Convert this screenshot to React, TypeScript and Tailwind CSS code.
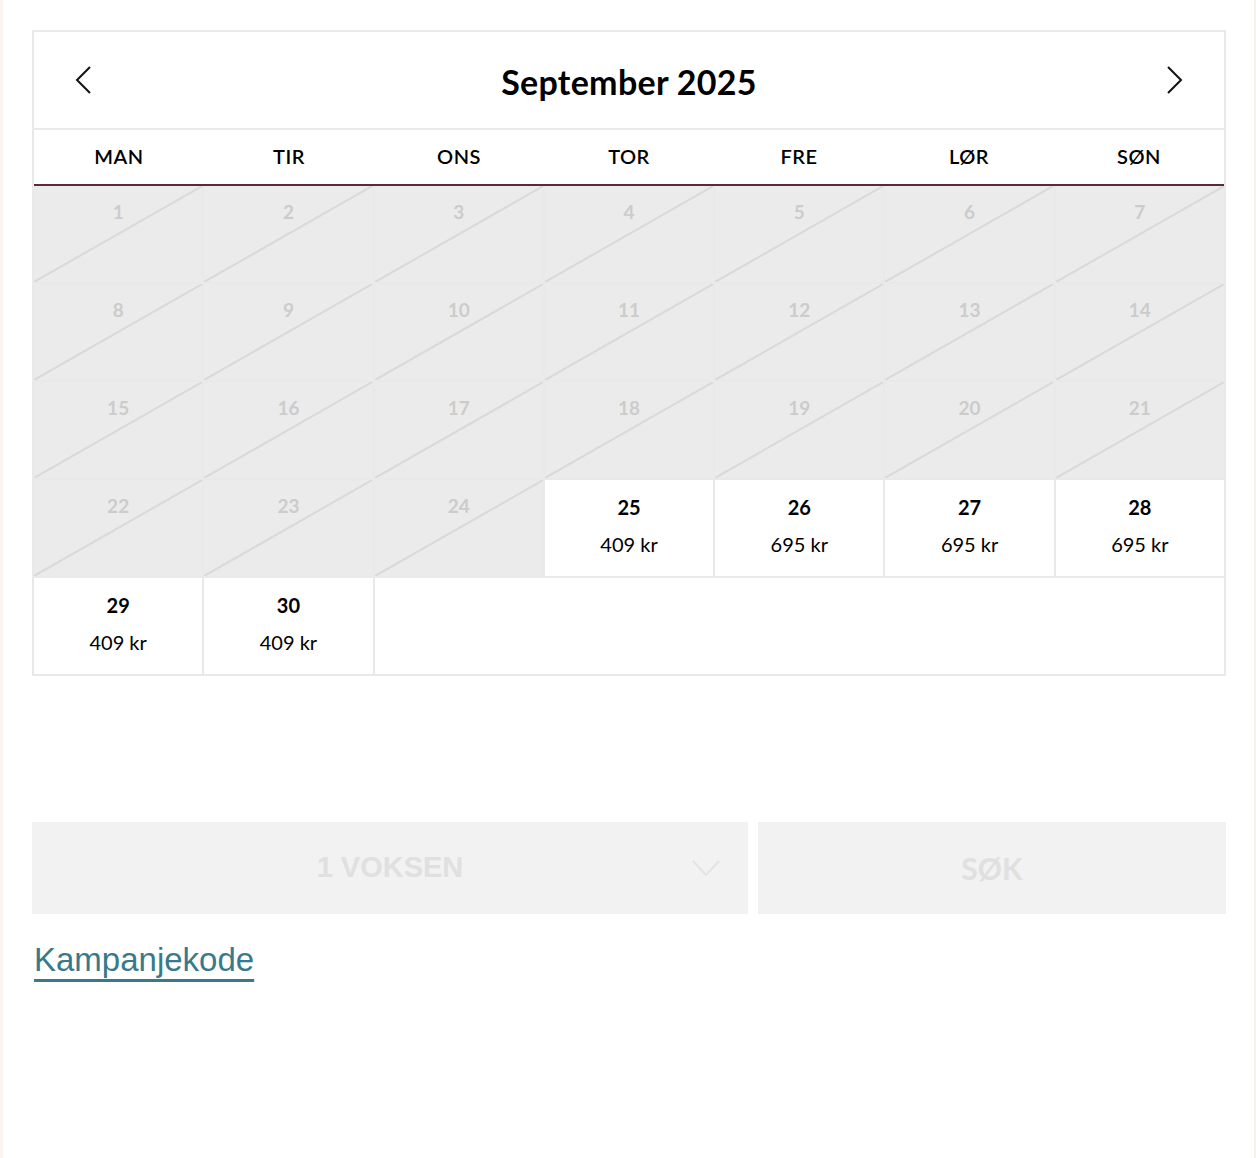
import React from "react";

const days = ["MAN", "TIR", "ONS", "TOR", "FRE", "LØR", "SØN"];

const prices: Record<number, string> = {
  25: "409 kr",
  26: "695 kr",
  27: "695 kr",
  28: "695 kr",
  29: "409 kr",
  30: "409 kr",
};

const font = { fontFamily: "Lato, 'Open Sans', sans-serif" };

function DisabledCell({ d }: { d: number }) {
  return (
    <div className="relative h-[96px] bg-[#ebebeb]">
      <svg
        className="absolute inset-0 h-full w-full"
        viewBox="0 0 100 100"
        preserveAspectRatio="none"
      >
        <line
          x1="0"
          y1="100"
          x2="100"
          y2="0"
          stroke="#d9d9d9"
          strokeWidth="2"
          vectorEffect="non-scaling-stroke"
        />
      </svg>
      <div className="relative pt-[14px] text-center text-[19px] font-bold leading-[24px] text-[#cccccc]">
        {d}
      </div>
    </div>
  );
}

function ActiveCell({ d }: { d: number }) {
  return (
    <div className="h-[96px] bg-white text-center text-black">
      <div className="pt-[15px] text-[20px] font-bold leading-[24px]">{d}</div>
      <div className="mt-[13px] text-[20px] leading-[24px]">{prices[d]}</div>
    </div>
  );
}

function Chevron({ dir }: { dir: "left" | "right" | "down" }) {
  if (dir === "down") {
    return (
      <svg width="28" height="16" viewBox="0 0 28 16" fill="none">
        <path d="M1 1 L14 15 L27 1" stroke="#e3e3e3" strokeWidth="2" />
      </svg>
    );
  }
  return (
    <svg width="18" height="28" viewBox="0 0 18 28" fill="none">
      <path
        d={dir === "left" ? "M16 1 L3 14 L16 27" : "M2 1 L15 14 L2 27"}
        stroke="#111"
        strokeWidth="2"
      />
    </svg>
  );
}

export default function App() {
  const cells: React.ReactNode[] = [];
  for (let d = 1; d <= 30; d++) {
    cells.push(d < 25 ? <DisabledCell key={d} d={d} /> : <ActiveCell key={d} d={d} />);
  }
  return (
    <div
      className="min-h-[1158px] w-[1256px] border-l-[3px] border-r-[2px] border-l-[#fbf3ee] border-r-[#f7f1ed] bg-white"
      style={font}
    >
      <div className="pl-[29px] pt-[30px] w-[1223px]">
        <div className="border-2 border-[#e9e9e9]">
          <div className="flex h-[96px] items-center justify-between bg-white pl-[40px] pr-[40px]">
            <Chevron dir="left" />
            <div className="pt-[4px] text-[34px] font-bold leading-none tracking-[0.3px] text-black">
              September 2025
            </div>
            <Chevron dir="right" />
          </div>
          <div className="grid h-[56px] grid-cols-7 border-t-2 border-[#e9e9e9] bg-white">
            {days.map((d) => (
              <div
                key={d}
                className="flex items-center justify-center pb-[2px] text-[20px] font-semibold tracking-[0.5px] text-black"
              >
                {d}
              </div>
            ))}
          </div>
          <div className="h-[2px] bg-[#5b2a3a]" />
          <div className="grid grid-cols-7 gap-[2px] bg-[#e9e9e9]">
            {cells}
            <div className="col-span-5 h-[96px] bg-white" />
          </div>
        </div>

        <div className="mt-[146px] flex gap-[10px]">
          <div className="relative flex h-[92px] w-[716px] items-center justify-center bg-[#f2f2f2]">
            <span
              className="text-[29px] font-bold text-[#e0e0e0]"
              style={{ fontFamily: "'Liberation Sans', Arial, sans-serif" }}
            >
              1 VOKSEN
            </span>
            <div className="absolute right-[28px] top-[38px]">
              <Chevron dir="down" />
            </div>
          </div>
          <div className="flex h-[92px] flex-1 items-center justify-center bg-[#f2f2f2]">
            <span className="text-[30px] font-bold text-[#e0e0e0]">SØK</span>
          </div>
        </div>

        <div className="mt-[26px] pl-[2px]">
          <a
            href="#"
            className="text-[33px] leading-[40px] text-[#387a8b] underline decoration-[3px] underline-offset-[8px]"
            style={{ fontFamily: "'Liberation Sans', Arial, sans-serif" }}
          >
            Kampanjekode
          </a>
        </div>
      </div>
    </div>
  );
}
